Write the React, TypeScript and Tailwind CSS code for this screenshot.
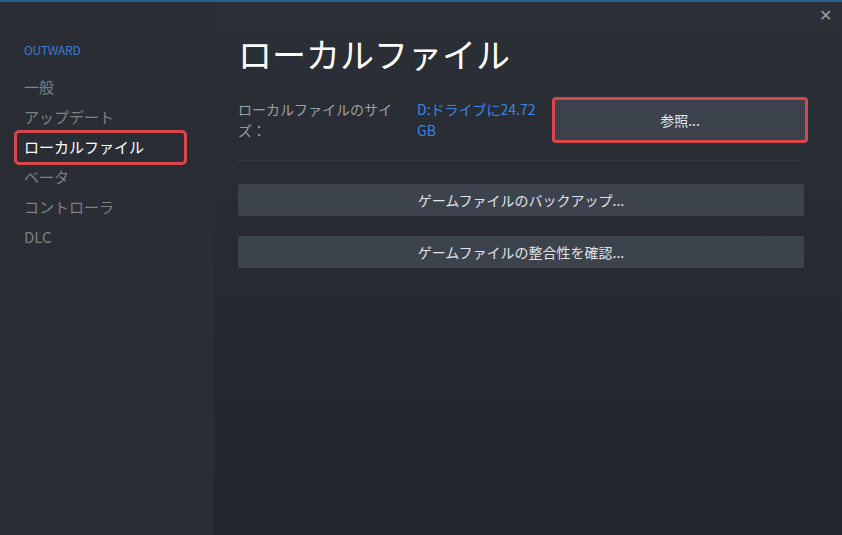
import React from 'react';

const navItems = ['一般', 'アップデート', 'ローカルファイル', 'ベータ', 'コントローラ', 'DLC'];

const App: React.FC = () => {
    const selected = 'ローカルファイル';

    return (
        <div
            className="w-[842px] h-[535px] flex flex-col overflow-hidden bg-[#24272f]"
            style={{ fontFamily: '"Noto Sans CJK JP", "Noto Sans", sans-serif' }}
        >
            {/* top accent line */}
            <div className="h-[2px] bg-[#22618f] shrink-0" />

            <div className="flex flex-1 min-h-0">
                {/* Sidebar */}
                <div className="w-[214px] shrink-0 bg-[#2a2d33] pt-[39px] pl-[24px]">
                    <div className="text-[12px] leading-[18px] text-[#3e7bd0] tracking-tight mb-[13px]">OUTWARD</div>
                    <ul className="flex flex-col">
                        {navItems.map((item) => (
                            <li
                                key={item}
                                className={`relative h-[30px] flex items-center text-[15px] ${item === selected ? 'text-white' : 'text-[#7d8187]'}`}
                            >
                                {item}
                                {item === selected && (
                                    <span className="absolute left-[-10px] top-[-2px] w-[173px] h-[35px] border-[3px] border-[#d8474b] rounded-[5px]" />
                                )}
                            </li>
                        ))}
                    </ul>
                </div>

                {/* Main */}
                <div className="relative flex-1 bg-gradient-to-b from-[#2b2f36] to-[#22252e] pl-[24px] pr-[38px] pt-[28px]">
                    <button className="absolute right-[10px] top-[4px] text-[#9aa0a6] text-[16px] leading-none">✕</button>

                    <h1 className="text-[34px] leading-[48px] text-white font-normal">ローカルファイル</h1>

                    <div className="flex mt-[19px]">
                        <div className="w-[165px] text-[14px] leading-[21px] text-[#9ba0a6] pt-[2px]">ローカルファイルのサイズ：</div>
                        <div className="ml-[14px] w-[130px] text-[14px] leading-[21px] text-[#3f86e6] pt-[2px]">D:ドライブに24.72 GB</div>
                        <div className="ml-[5px] flex-1 -mr-[4px]">
                            <div className="border-[3px] border-[#d8474b] rounded-[4px] p-0">
                                <button className="w-full h-[40px] bg-[#3d434c] text-[#e4e7ea] text-[14px]">参照...</button>
                            </div>
                        </div>
                    </div>

                    <div className="h-px bg-[#363a42] mt-[17px] mr-[4px]" />

                    <div className="flex flex-col gap-[20px] mt-[23px]">
                        <button className="h-[32px] w-full bg-[#3d434c] rounded-[2px] text-[#e1e4e7] text-[14px]">ゲームファイルのバックアップ...</button>
                        <button className="h-[32px] w-full bg-[#3d434c] rounded-[2px] text-[#e1e4e7] text-[14px]">ゲームファイルの整合性を確認...</button>
                    </div>
                </div>
            </div>
        </div>
    );
};

export default App;
